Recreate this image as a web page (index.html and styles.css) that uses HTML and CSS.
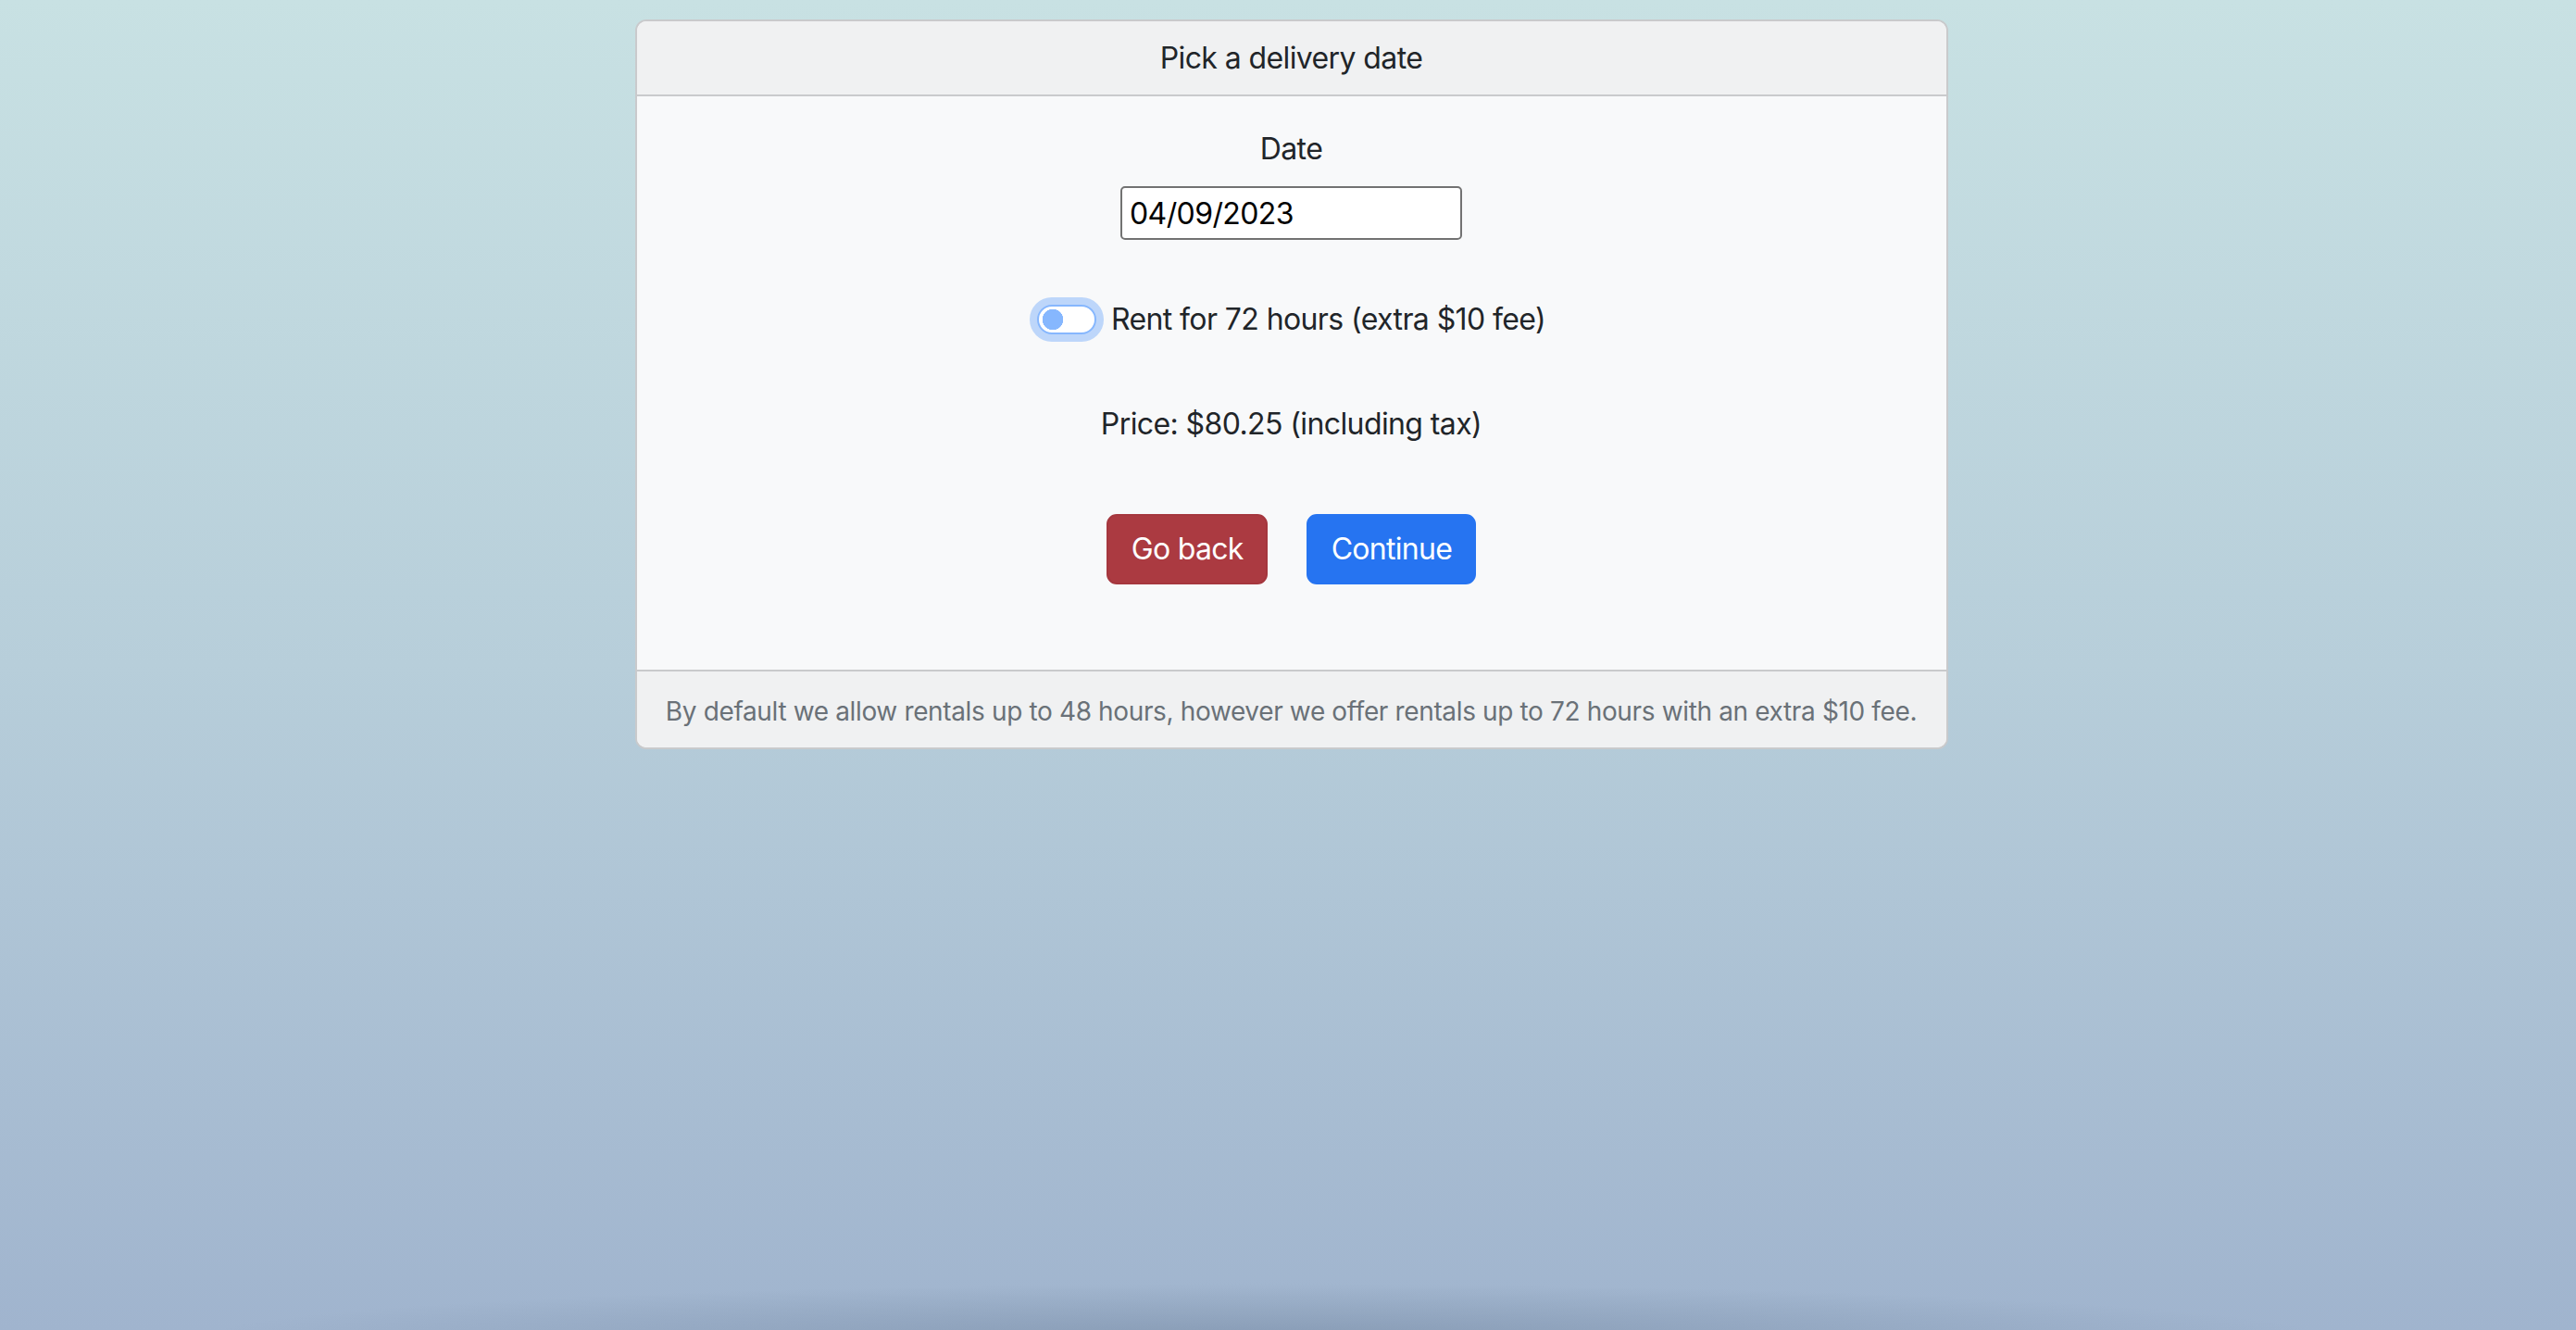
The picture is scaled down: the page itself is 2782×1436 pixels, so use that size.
FILE: index.html
```html
<!DOCTYPE html>
<html lang="en">
<head>
<meta charset="utf-8">
<title>Pick a delivery date</title>
<link rel="stylesheet" href="styles.css">
</head>
<body>
<main class="page">
  <section class="card">
    <header class="card-header">Pick a delivery date</header>
    <div class="card-body">
      <label class="date-label" for="date">Date</label>
      <input class="date-input" id="date" type="text" value="04/09/2023">
      <div class="toggle-row">
        <input class="switch" type="checkbox" id="rent72">
        <label class="toggle-label" for="rent72">Rent for 72 hours (extra $10 fee)</label>
      </div>
      <p class="price">Price: $80.25 (including tax)</p>
      <div class="actions">
        <button class="btn btn-danger" type="button">Go back</button>
        <button class="btn btn-primary" type="button">Continue</button>
      </div>
    </div>
    <footer class="card-footer">By default we allow rentals up to 48 hours, however we offer rentals up to 72 hours with an extra $10 fee.</footer>
  </section>
</main>
</body>
</html>
```

FILE: styles.css
```css
html, body {
  margin: 0;
  padding: 0;
  height: 100%;
}

body {
  font-family: Inter, "Liberation Sans", Arial, sans-serif;
  font-size: 32px;
  line-height: 48px;
  letter-spacing: -0.6px;
  color: #212529;
  background:
    radial-gradient(1150px 60px at 1365px 1446px, rgba(110, 130, 155, 0.5), rgba(110, 130, 155, 0) 100%),
    linear-gradient(180deg, #c8e1e3 0%, #b7ceda 50%, #a0b4ce 100%);
  background-repeat: no-repeat;
  min-height: 1436px;
}

.page {
  display: flex;
  justify-content: center;
  padding-top: 21px;
  padding-left: 7px;
}

.card {
  width: 1418px;
  box-sizing: border-box;
  border: 2px solid #c9cacc;
  border-radius: 12px;
  overflow: hidden;
  background: #f8f9fa;
  display: flex;
  flex-direction: column;
}

.card-header {
  background: #f0f1f2;
  border-bottom: 2px solid #c9cacc;
  padding: 16px 32px 15px;
  text-align: center;
}

.card-body {
  padding: 33px 32px 92px;
  display: flex;
  flex-direction: column;
  align-items: center;
}

.date-label {
  display: block;
  margin-bottom: 16px;
}

.date-input {
  width: 369px;
  height: 58px;
  box-sizing: border-box;
  border: 2px solid #727272;
  border-radius: 5px;
  background: #fff;
  color: #000;
  font-family: Inter, "Liberation Sans", Arial, sans-serif;
  font-size: 32px;
  letter-spacing: -0.6px;
  padding: 0 8px;
  margin: 0;
  outline: none;
}

.toggle-row {
  margin-top: 62px;
  display: flex;
  align-items: center;
  gap: 16px;
  height: 48px;
}

.switch {
  appearance: none;
  -webkit-appearance: none;
  margin: 0;
  width: 64px;
  height: 32px;
  box-sizing: border-box;
  border: 2px solid #86b7fe;
  border-radius: 16px;
  background: #fff radial-gradient(circle at 15px 50%, #86b7fe 0, #86b7fe 11px, transparent 11.5px);
  box-shadow: 0 0 0 8px rgba(13, 110, 253, 0.25);
}

.toggle-label {
  white-space: nowrap;
}

.price {
  margin: 65px 0 0;
}

.actions {
  margin-top: 73px;
  display: flex;
  gap: 42px;
}

.btn {
  font-family: Inter, "Liberation Sans", Arial, sans-serif;
  font-size: 32px;
  line-height: 48px;
  letter-spacing: -0.7px;
  padding: 12px 24px 12px 25px;
  border-radius: 11px;
  border: 2px solid transparent;
  color: #fff;
  cursor: pointer;
}

.btn-danger {
  background: #ab3a41;
  border-color: #a5373e;
}

.btn-primary {
  background: #2674f1;
  border-color: #2674f1;
}

.card-footer {
  background: #f0f1f2;
  border-top: 2px solid #c9cacc;
  padding: 19px 20px 15px;
  text-align: center;
  font-size: 28px;
  letter-spacing: -0.36px;
  white-space: nowrap;
  color: #6a7178;
}
```
